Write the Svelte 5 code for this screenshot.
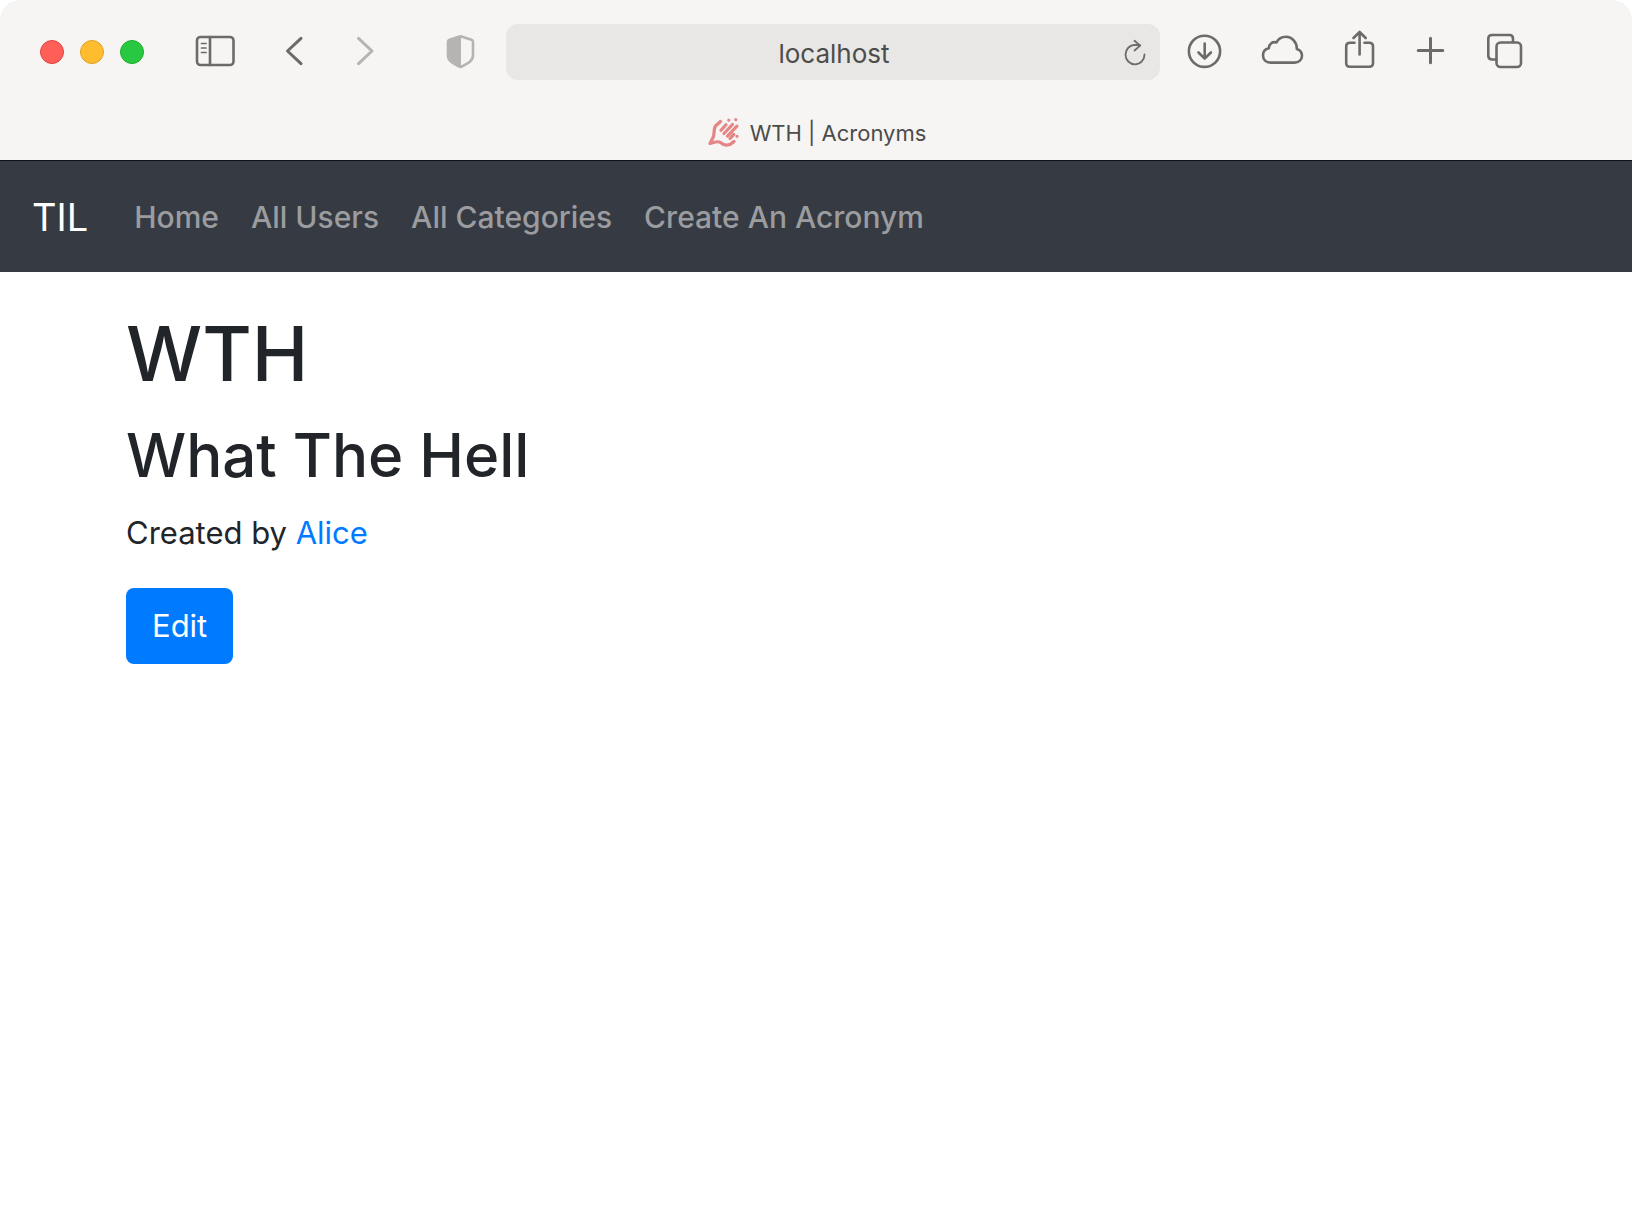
<script>
  const links = ['Home', 'All Users', 'All Categories', 'Create An Acronym'];
  let address = $state('localhost');
</script>

<div class="window">
  <header class="chrome">
    <div class="toolbar">
      <div class="lights">
        <button class="light close" aria-label="Close window"></button>
        <button class="light minimise" aria-label="Minimise window"></button>
        <button class="light zoom" aria-label="Zoom window"></button>
      </div>

      <button class="icon sidebar" aria-label="Show sidebar">
        <svg viewBox="0 0 44 44">
          <rect x="3" y="7" width="36.500" height="28" rx="3.500" />
          <path d="M16 7v28" />
          <path class="fine" d="M7.500 13.500h4.500M7.500 18h4.500M7.500 22.500h4.500" />
        </svg>
      </button>

      <div class="history">
        <button class="icon" aria-label="Back">
          <svg viewBox="0 0 44 44"><path class="bold" d="M29 8.300 15.500 21 29 33.700" /></svg>
        </button>
        <button class="icon pale" aria-label="Forward" disabled>
          <svg viewBox="0 0 44 44"><path class="bold" d="M15.500 8.300 29 21 15.500 33.700" /></svg>
        </button>
      </div>

      <button class="icon shield pale" aria-label="Privacy report">
        <svg viewBox="0 0 44 44">
          <path d="M22.500 6.200 33.500 9.800Q35 10.300 35 12V25.500C35 31 30 33.500 22.500 37 15 33.500 10 31 10 25.500V12Q10 10.300 11.500 9.800Z" />
          <path class="solid" d="M23 5.500 11 9.500Q9.500 10 9.500 12V26C9.500 31 15 33.500 23 37Z" />
        </svg>
      </button>

      <div class="address">
        <input aria-label="Address" bind:value={address} />
        <button class="icon" aria-label="Reload">
          <svg viewBox="0 0 44 44">
            <path class="thin" d="M30.500 24.500A9.500 9.700 0 1 1 21 14.900L26 15.200" />
            <path class="thin" d="M20.500 10.800 26.200 15.600 20.500 20.500" />
          </svg>
        </button>
      </div>

      <div class="actions">
        <button class="icon" aria-label="Downloads">
          <svg viewBox="0 0 44 44">
            <circle cx="22.500" cy="21.300" r="15.600" />
            <path d="M22.700 13.500V28.500M16.500 22.500 22.700 28.700 28.900 22.500" />
          </svg>
        </button>
        <button class="icon cloud" aria-label="Cloud tabs">
          <svg viewBox="0 0 44 44">
            <path d="M10.500 32.600H34.500C39 32.600 42 29.500 42 25.800 42 22.500 40 20 36.800 19 37 12 32 6.800 26 6.800 21.500 6.800 18.300 9 16.500 12.400 12.500 11.200 9 14 8.800 18.200 5.500 18.800 3 21.500 3 25.300 3 29.500 6 32.600 10.500 32.600Z" />
          </svg>
        </button>
        <button class="icon share" aria-label="Share">
          <svg viewBox="0 0 44 44">
            <path d="M16.500 12.700H12Q8.200 12.700 8.200 16.500V33Q8.200 36.800 12 36.800H31.200Q35 36.800 35 33V16.500Q35 12.700 31.200 12.700H26.500" />
            <path d="M21.600 24.500V2.500M15.500 8 21.600 2 27.700 8" />
          </svg>
        </button>
        <button class="icon plus" aria-label="New tab">
          <svg viewBox="0 0 44 44"><path class="bold" d="M22.500 8.200V32.800M10.200 20.500H34.800" /></svg>
        </button>
        <button class="icon overview" aria-label="Tab overview">
          <svg viewBox="0 0 44 44">
            <path d="M14.500 29.500H10Q6.300 29.500 6.300 25.800V8.700Q6.300 5 10 5H27.500Q31 5 31 8.700V12" />
            <rect x="14.500" y="12.500" width="24.500" height="24.500" rx="4" />
          </svg>
        </button>
      </div>
    </div>

    <div class="tab">
      <svg class="favicon" viewBox="0 0 32 32" aria-hidden="true">
        <path d="M12.500 4.500 7.500 9C5.500 12 6.500 16 5.500 19.500L2 26.500Q10 23.500 12.500 25.500C17 29.500 22 28.500 26 24.500" />
        <path d="M13 13.300 18 7.700M16 16.500 24.500 7.500M19.500 19 29 9.200M22 21.300 25.800 17.500" />
        <path d="M20.800 3.200h.01M27.800 2.700h.01M29 19.300h.01" />
      </svg>
      <span>WTH | Acronyms</span>
    </div>
  </header>

  <nav>
    <a class="brand" href="#top">TIL</a>
    <ul>
      {#each links as link}
        <li><a href="#{link.toLowerCase().replaceAll(' ', '-')}">{link}</a></li>
      {/each}
    </ul>
  </nav>

  <main>
    <h1>WTH</h1>
    <h2>What The Hell</h2>
    <p>Created by <a href="#alice">Alice</a></p>
    <button class="edit">Edit</button>
  </main>
</div>

<style>
  :global(body) {
    margin: 0;
    background: #fff;
  }

  .window {
    min-height: 100vh;
    background: #fff;
    color: #212529;
    font-family: Inter, 'Liberation Sans', sans-serif;
    font-size: 31px;
    line-height: 48px;
  }

  button,
  input {
    box-sizing: border-box;
    margin: 0;
    padding: 0;
    border: 0;
    background: none;
    font: inherit;
  }

  a {
    text-decoration: none;
  }

  .chrome {
    overflow: hidden;
    border-bottom: 1px solid #0d131a;
    border-radius: 20px 20px 0 0;
    background: #f6f5f3;
  }

  .toolbar {
    display: flex;
    align-items: center;
    padding: 24px 106px 0 40px;
  }

  .lights {
    display: flex;
    gap: 16px;
    margin-right: 50px;
  }

  .light {
    width: 24px;
    height: 24px;
    border: 1px solid #e2443f;
    border-radius: 50%;
    background: #ff5f57;
  }

  .minimise {
    border-color: #dfa023;
    background: #febc2e;
  }

  .zoom {
    border-color: #1dad2b;
    background: #28c840;
  }

  .icon {
    flex: none;
    width: 44px;
    height: 44px;
    color: #6c6b69;
  }

  .pale {
    color: #b5b4b2;
  }

  .icon svg {
    display: block;
    fill: none;
    stroke: currentColor;
    stroke-width: 2.6;
    stroke-linecap: round;
    stroke-linejoin: round;
  }

  .icon .bold {
    stroke-width: 3;
  }

  .icon .thin {
    stroke-width: 1.8;
  }

  .icon .fine {
    stroke-width: 1.7;
  }

  .icon .solid {
    fill: currentColor;
    stroke: none;
  }

  .sidebar {
    margin-right: 34px;
  }

  .history {
    display: flex;
    gap: 27px;
  }

  .shield {
    margin: 0 24px 0 51px;
  }

  .address {
    display: flex;
    flex: 1;
    align-items: center;
    box-sizing: border-box;
    min-width: 0;
    height: 56px;
    padding: 0 2px 0 48px;
    border-radius: 12px;
    background: #e8e7e5;
  }

  input {
    flex: 1;
    min-width: 0;
    padding-top: 4px;
    color: #4c4c4a;
    font-size: 26px;
    text-align: center;
  }

  .actions {
    display: flex;
    margin-left: 22px;
  }

  .cloud,
  .share {
    margin-left: 34px;
  }

  .plus {
    margin-left: 26px;
  }

  .overview {
    margin-left: 30px;
  }

  .tab {
    display: flex;
    align-items: center;
    justify-content: center;
    gap: 10px;
    padding: 29px 0 3px 2px;
    color: #4c4c4a;
    font-size: 22px;
  }

  .favicon {
    width: 32px;
    height: 32px;
    fill: none;
    stroke: #e58585;
    stroke-width: 3.2;
    stroke-linecap: round;
    stroke-linejoin: round;
  }

  nav {
    display: flex;
    align-items: center;
    gap: 46px;
    padding: 32px 32px 31px;
    background: #363a42;
  }

  .brand {
    color: #fff;
    font-size: 38px;
  }

  ul {
    display: flex;
    gap: 32px;
    margin: 0;
    padding: 0;
    list-style: none;
    font-size: 30px;
    font-weight: 500;
  }

  li a {
    color: #9a9c9f;
  }

  main {
    max-width: 1380px;
    margin: 0 auto;
    padding: 33px 30px;
  }

  h1,
  h2 {
    margin: 0 0 16px;
    font-weight: 500;
  }

  h1 {
    font-size: 76px;
    line-height: 96px;
  }

  h2 {
    font-size: 60px;
    line-height: 76px;
  }

  p {
    margin: 0 0 31px;
  }

  p a {
    color: #007bff;
  }

  .edit {
    padding: 14px 26px;
    border-radius: 8px;
    background: #007bff;
    color: #fff;
  }
</style>
